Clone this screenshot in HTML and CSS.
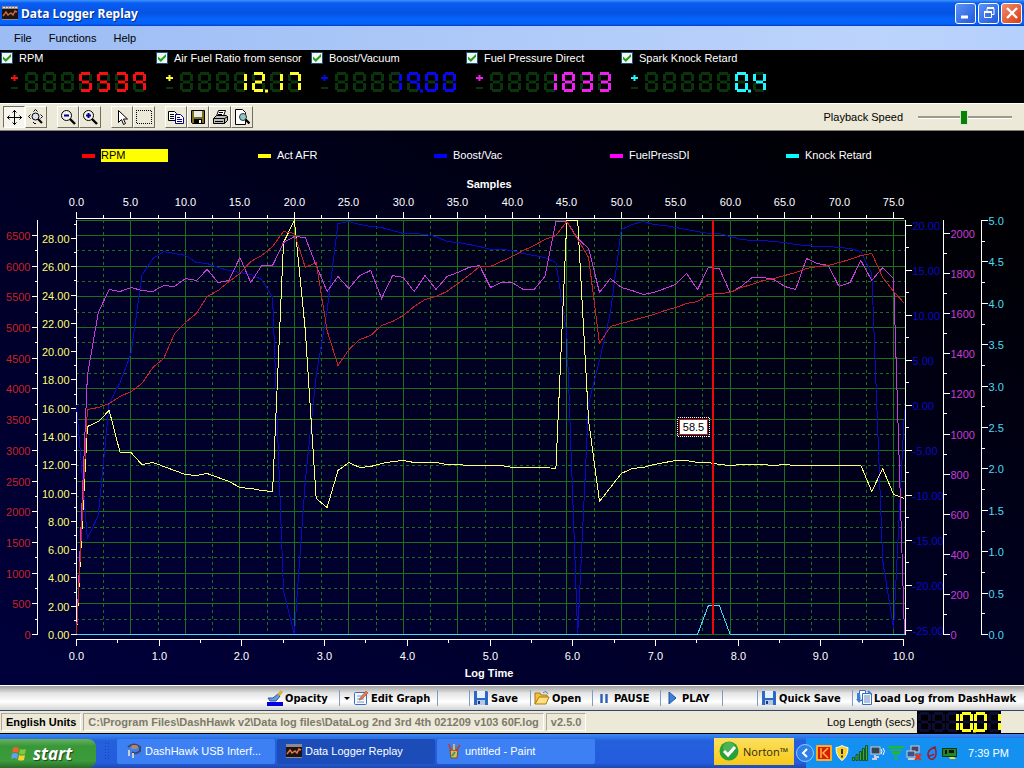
FILE: index.html
```
<!DOCTYPE html>
<html lang="en">
<head>
    <meta charset="UTF-8">
    <meta name="viewport" content="width=device-width, initial-scale=1.0">
    <title>Data Logger Replay</title>
    <link rel="stylesheet" href="styles.css">
</head>
<body>
    <header class="titlebar">
        <svg class="app-icon" width="16" height="14" viewBox="0 0 16 14"><rect width="16" height="14" fill="#8a8a90"/><rect y="3" width="16" height="10" fill="#1c1414"/><path d="M1 10l3-4 2 3 3-2 2 2 2-4 2 1" stroke="#c86838" stroke-width="1.500" fill="none"/><path d="M1 1.500h14" stroke="#ddd" stroke-dasharray="2 1"/></svg>
        <h1>Data Logger Replay</h1>
        <div class="window-buttons">
            <button class="win-btn" aria-label="Minimize"><svg width="18" height="18" viewBox="0 0 18 18"><path d="M4 13h7" stroke="#fff" stroke-width="3"/></svg></button>
            <button class="win-btn" aria-label="Restore"><svg width="18" height="18" viewBox="0 0 18 18" fill="none" stroke="#fff"><path d="M7 7V4.500h7v6h-2"/><path d="M7 4h7" stroke-width="2"/><path d="M4.500 7.500h7v6h-7z"/><path d="M4 8h8" stroke-width="2"/></svg></button>
            <button class="win-btn close" aria-label="Close"><svg width="18" height="18" viewBox="0 0 18 18"><path d="M4 4l10 10M14 4L4 14" stroke="#fff" stroke-width="2.400"/></svg></button>
        </div>
    </header>

    <nav class="menubar">
        <a href="#file">File</a>
        <a href="#functions">Functions</a>
        <a href="#help">Help</a>
    </nav>

    <section class="gauges" id="gauges"></section>

    <div class="toolbar">
        <div class="tool-group">
            <button class="tool pressed" aria-label="Pan"><svg width="16" height="16" viewBox="0 0 16 16" fill="none" stroke="#000"><path d="M8.500 1v15M1 8.500h15M6.500 3.500l2-2 2 2M6.500 13.500l2 2 2-2M3.500 6.500l-2 2 2 2M13.500 6.500l2 2-2 2"/></svg></button>
            <button class="tool" aria-label="Zoom pan"><svg width="16" height="16" viewBox="0 0 16 16" fill="none" stroke="#000"><circle cx="7.500" cy="7.500" r="3.500" fill="#dde"/><path d="M10 10l4 4" stroke-width="2"/><path d="M5.500 2.500l2-2 2 2M2.500 5.500l-2 2 2 2M12.500 5.500l2 2-2 2M5 13l2 2 1-1"/></svg></button>
        </div>
        <div class="tool-group">
            <button class="tool" aria-label="Zoom out"><svg width="16" height="16" viewBox="0 0 16 16" fill="none" stroke="#000"><circle cx="6.500" cy="6.500" r="5" fill="#f4f4f4"/><path d="M10 10l5 5" stroke-width="2.400"/><path d="M4 6.500h5" stroke="#000080" stroke-width="2"/></svg></button>
            <button class="tool" aria-label="Zoom in"><svg width="16" height="16" viewBox="0 0 16 16" fill="none" stroke="#000"><circle cx="6.500" cy="6.500" r="5" fill="#f4f4f4"/><path d="M10 10l5 5" stroke-width="2.400"/><path d="M4 6.500h5M6.500 4v5" stroke="#000080" stroke-width="2"/></svg></button>
        </div>
        <div class="tool-group">
            <button class="tool" aria-label="Select"><svg width="16" height="16" viewBox="0 0 16 16"><path d="M4.500 1.500v12l3-3 2 5 2-1-2-4.500h4z" fill="#fff" stroke="#000"/></svg></button>
            <button class="tool" aria-label="Select area"><svg width="16" height="16" viewBox="0 0 16 16"><rect x=".5" y="1.500" width="15" height="13" fill="none" stroke="#000" stroke-dasharray="1 1" stroke-dashoffset=".5" shape-rendering="crispEdges"/></svg></button>
        </div>
        <div class="tool-group">
            <button class="tool" aria-label="Copy"><svg width="16" height="16" viewBox="0 0 16 16" fill="#fff"><path d="M.5 2.500h6l2 2v7h-8z" stroke="#000"/><path d="M2 5.500h4M2 7.500h4M2 9.500h4" stroke="#000"/><path d="M7.500 5.500h5l3 3v6h-8z" stroke="#000080"/><path d="M9 8.500h3M9 10.500h5M9 12.500h5" stroke="#000080"/></svg></button>
            <button class="tool" aria-label="Save"><svg width="16" height="16" viewBox="0 0 16 16"><path d="M1.500 1.500h13v13h-12l-1-1z" fill="#777020" stroke="#000"/><rect x="4" y="2" width="8" height="6" fill="#e8e8e8"/><rect x="4" y="10" width="8" height="5"/><rect x="9" y="11" width="2" height="3" fill="#fff"/></svg></button>
            <button class="tool" aria-label="Print"><svg width="16" height="16" viewBox="0 0 16 16" stroke="#000"><path d="M4.500 7l2-5.500h7l-2 5.500" fill="#fff"/><path d="M7 3.500h4M6 5.500h4"/><path d="M1.500 9.500l3-3h10l1 1v4l-3 3h-11z" fill="#bbb"/><path d="M1.500 9.500h11v5M12.500 9.500l3-2M3 12.500h8" fill="none"/></svg></button>
            <button class="tool" aria-label="Print preview"><svg width="16" height="16" viewBox="0 0 16 16"><path d="M1.500.5h7l3 3v12h-10z" fill="#fff" stroke="#000"/><circle cx="9" cy="8" r="3.500" fill="#8cc8d0" stroke="#333"/><path d="M11.500 10.500l4 4" stroke="#000" stroke-width="2.400"/></svg></button>
        </div>
        <label class="speed-label" for="speed">Playback Speed</label>
        <input class="speed" id="speed" type="range" min="0" max="100" value="49">
    </div>

    <main class="chart">
        <ul class="legend">
            <li class="rpm"><span>RPM</span></li>
            <li class="afr"><span>Act AFR</span></li>
            <li class="boost"><span>Boost/Vac</span></li>
            <li class="fuel"><span>FuelPressDI</span></li>
            <li class="knock"><span>Knock Retard</span></li>
        </ul>
        <svg class="plot" id="plot" viewBox="0 170 1024 515"></svg>
    </main>

    <div class="actions">
        <button class="action no-line start-col"><svg width="16" height="16" viewBox="0 0 16 16"><path d="M1 8h5l5-4 2 2-4 5H3z" fill="#6c9ce0" stroke="#2850a0"/><path d="M10 4l4-4 2 2-3 4z" fill="#d8b040"/><rect y="12" width="16" height="4" fill="#0000e0"/></svg>Opacity</button>
        <button class="action"><svg width="8" height="16" viewBox="0 0 8 16"><path d="M1 7h6l-3 3z"/></svg><svg width="16" height="16" viewBox="0 0 16 16"><rect x="1.500" y="2.500" width="12" height="12" rx="1" fill="#f4f8ff" stroke="#3c6cc0"/><path d="M4 6h6M4 9h7M4 12h7" stroke="#6c9ce0"/><path d="M7 8l6-7 2 2-6 6-3 1z" fill="#e87848" stroke="#b04820" stroke-width=".6"/></svg>Edit Graph</button>
        <span class="blank"></span>
        <button class="action"><svg width="16" height="16" viewBox="0 0 16 16"><path d="M1 1h13l1 1v13H1z" fill="#2c68c8"/><rect x="4" y="1" width="8" height="7" fill="#e8f0ff"/><rect x="4" y="10" width="8" height="5" fill="#b8c8e0"/><rect x="5" y="11" width="2" height="3" fill="#1c3c80"/></svg>Save</button>
        <button class="action"><svg width="16" height="16" viewBox="0 0 16 16"><path d="M1 14V3h5l1 2h6v3" fill="#f0c040" stroke="#a87808"/><path d="M1 14l4-7h10l-3 7z" fill="#ffe080" stroke="#a87808"/><path d="M9 3q3-3 5 1" fill="none" stroke="#3c80c0"/></svg>Open</button>
        <button class="action wide"><svg width="10" height="16" viewBox="0 0 10 16"><path d="M2.500 4v9M7.500 4v9" stroke="#2c60b8" stroke-width="2.400"/></svg>PAUSE</button>
        <button class="action wide"><svg width="10" height="16" viewBox="0 0 10 16"><path d="M2 2l7 6-7 6z" fill="#3c80e0" stroke="#2050a0"/></svg>PLAY</button>
        <span class="blank"></span>
        <button class="action"><svg width="16" height="16" viewBox="0 0 16 16"><path d="M1 1h13l1 1v13H1z" fill="#2c68c8"/><rect x="4" y="1" width="8" height="7" fill="#e8f0ff"/><rect x="4" y="10" width="8" height="5" fill="#b8c8e0"/><rect x="5" y="11" width="2" height="3" fill="#1c3c80"/></svg>Quick Save</button>
        <button class="action"><svg width="16" height="16" viewBox="0 0 16 16"><path d="M3.500.5h6v10h-6z" fill="#fff" stroke="#3c6cc0"/><path d="M6.500 3.500h9v11h-9z" fill="#f4f8ff" stroke="#3c6cc0"/><path d="M8 6h6M8 8h6M8 10h6M8 12h6" stroke="#6c8cc0"/><path d="M4 3H1v6h2l2 3M0 9h6l-3 4z" fill="#3c80e0"/><path d="M12 1l3 3" stroke="#3c80e0" stroke-width="2"/></svg>Load Log from DashHawk</button>
    </div>

    <footer class="statusbar">
        <span class="panel units">English Units</span>
        <span class="panel muted">C:\Program Files\DashHawk v2\Data log files\DataLog 2nd 3rd 4th 021209 v103 60F.log</span>
        <span class="panel muted">v2.5.0</span>
        <span class="log-label">Log Length (secs)</span>
        <span class="log-display" id="log-length"></span>
    </footer>

    <div class="taskbar">
        <button class="start"><svg width="18" height="18" viewBox="0 0 18 18"><path d="M3 3q3-2 6 0l-1 5q-3-2-6 0z" fill="#f06030"/><path d="M10 4q3 1 6 0l-1 5q-3 1-6 0z" fill="#80c840"/><path d="M2 9q3-2 6 0l-1 5q-3-2-6 0z" fill="#60a0f8"/><path d="M9 10q3 1 6 0l-1 5q-3 1-6 0z" fill="#f8d030"/></svg>start</button>
        <span class="grip"></span>
        <button class="task"><svg width="16" height="16" viewBox="0 0 16 16"><path d="M2 4q6-5 12 0v4q-5 4-8 1" fill="none" stroke="#446" stroke-width="2"/><rect x="5" y="2" width="7" height="4" rx="2" fill="#b08868"/><path d="M3 7v6M7 10v5" stroke="#ccc" stroke-width="2"/></svg>DashHawk USB Interf...</button>
        <button class="task active"><svg width="16" height="14" viewBox="0 0 16 14"><rect width="16" height="14" fill="#8a8a90"/><rect y="3" width="16" height="10" fill="#1c1414"/><path d="M1 10l3-4 2 3 3-2 2 2 2-4 2 1" stroke="#e87840" stroke-width="1.500" fill="none"/></svg>Data Logger Replay</button>
        <button class="task"><svg width="16" height="16" viewBox="0 0 16 16"><path d="M4 7h8l-1 8H5z" fill="#d8b870" stroke="#705020"/><path d="M5 8L3 1M8 8V1M10 8l4-6" stroke="#c83820" stroke-width="1.500"/><path d="M8 7V1" stroke="#e8e040" stroke-width="1.500"/><path d="M6 13l3-4" stroke="#40a040" stroke-width="2"/></svg>untitled - Paint</button>
        <span class="norton"><svg width="20" height="20" viewBox="0 0 20 20"><circle cx="10" cy="10" r="9.500" fill="#28a038"/><circle cx="10" cy="7" r="6" fill="#70c870" opacity=".5"/><path d="M5 10l4 4 7-8" fill="none" stroke="#fff" stroke-width="3"/></svg>Norton™</span>
        <div class="tray">
            <button class="chevron" aria-label="Show hidden icons"><svg width="18" height="18" viewBox="0 0 18 18"><circle cx="9" cy="9" r="8.500" fill="#2c80e8" stroke="#90c8ff"/><path d="M11 5L7 9l4 4" fill="none" stroke="#fff" stroke-width="2"/></svg></button>
            <svg width="16" height="16" viewBox="0 0 16 16"><rect width="16" height="16" rx="1" fill="#f8b020"/><rect x="2" y="2" width="12" height="12" fill="#e01808"/><path d="M5 3v10M12 3L7 8l5 5" stroke="#f8c030" stroke-width="1.500" fill="none"/></svg>
            <svg width="16" height="16" viewBox="0 0 16 16"><path d="M8 .5q3 2 6 2 0 9-6 13-6-4-6-13 3 0 6-2z" fill="#f8d020" stroke="#fff"/><path d="M8 4v5M8 10.500v2" stroke="#333" stroke-width="2"/></svg>
            <svg width="16" height="16" viewBox="0 0 16 16" fill="#40a830" stroke="#104810" stroke-width=".8"><path d="M.5 12.500h2v3h-2zM4 9.500h2v6H4zM7.500 6.500h2v9h-2zM10.500 3.500h2v12h-2zM13.500.5h2v15h-2z"/></svg>
            <svg width="16" height="16" viewBox="0 0 16 16"><rect x="1" y="2" width="9" height="7" fill="#345" stroke="#ccd"/><path d="M5 10v2h4M2 14h5" stroke="#ccd" stroke-width="2" fill="none"/><path d="M11 4q2 2 0 5M13 3q3 3 0 7" fill="none" stroke="#fff"/></svg>
            <svg width="16" height="16" viewBox="0 0 16 16" stroke="#20b838" stroke-width="2"><path d="M0 2h16M2 5h12M4 8h8M6 11h4M7 14h2"/></svg>
            <svg width="16" height="16" viewBox="0 0 16 16"><rect x="5" y="1" width="8" height="6" fill="#446" stroke="#ccd"/><rect x="1" y="6" width="8" height="6" fill="#358" stroke="#ccd"/><path d="M2 14h7" stroke="#ccd" stroke-width="2"/><path d="M9 9l6 6M15 9l-6 6" stroke="#e83010" stroke-width="2"/></svg>
            <svg width="16" height="16" viewBox="0 0 16 16"><path d="M11 2Q3 5 4 10t5 4q5-3 2-12zM4 10q2 2 6-1" fill="none" stroke="#a01830" stroke-width="1.500"/></svg>
            <svg width="16" height="16" viewBox="0 0 16 16"><rect x=".5" y="3.500" width="14" height="8" fill="#208828" stroke="#083810"/><path d="M3 5h2v4H3zM7 5h5v3H7z" fill="#111"/><path d="M7 12h5l2 2H8z" fill="#f0e030"/></svg>
            <time class="clock">7:39 PM</time>
        </div>
    </div>

    <script src="script.js"></script>
</body>
</html>
```
FILE: styles.css
```
* {
    box-sizing: border-box;
}
body {
    margin: 0;
    min-height: 100vh;
    display: flex;
    flex-direction: column;
    font-family: "Liberation Sans", Arial, sans-serif;
    font-size: 11px;
    background: #000;
    overflow-x: hidden;
}
button {
    font: inherit;
    padding: 0;
    border: 0;
    background: none;
}
svg {
    flex: none;
}

/* title and menu */
.titlebar {
    height: 26px;
    display: flex;
    align-items: center;
    gap: 3px;
    padding: 0 2px;
    background: linear-gradient(#3c96ff, #0a5cf0 12%, #0454e4 50%, #0464fc 75%, #0460f8 92%, #0040c0);
}
.titlebar h1 {
    flex: 1;
    margin: 0;
    font: bold 12px "Noto Sans", sans-serif;
    color: #fff;
    text-shadow: 1px 1px #0a2a80;
}
.window-buttons {
    display: flex;
    gap: 2px;
}
.win-btn {
    width: 21px;
    height: 21px;
    display: grid;
    place-items: center;
    border: 1px solid #fff;
    border-radius: 3px;
    background: linear-gradient(135deg, #5c94f4, #2058dc);
}
.win-btn.close { background: linear-gradient(135deg, #f08c6c, #d83c14); }
.menubar {
    height: 24px;
    display: flex;
    align-items: center;
    gap: 17px;
    padding-left: 14px;
    background: linear-gradient(90deg, #9cbcf4, #bcd4fc 85%, #b4d0fc);
}
.menubar a {
    color: #000;
    text-decoration: none;
}

/* LED readouts */
.gauges {
    display: flex;
    height: 53px;
    background: #000;
    color: #fff;
}
.gauge {
    flex: 0 0 155px;
    padding: 2px 0 0 1px;
}
.gauge label {
    display: flex;
    align-items: center;
    gap: 6px;
    height: 12px;
    white-space: nowrap;
}
.gauge input {
    appearance: none;
    width: 12px;
    height: 12px;
    margin: 0;
    background: #f4f4f0;
    border: 1px solid #1c5180;
}
.gauge input:checked::before {
    content: "";
    display: block;
    width: 8px;
    height: 8px;
    margin: 1px;
    background: #21a121;
    clip-path: polygon(0 30%, 35% 62%, 100% 0, 100% 35%, 35% 100%, 0 65%);
}
.readout {
    display: flex;
    align-items: flex-start;
    gap: 5px;
    padding: 8px 0 0 9px;
}
.sign, .digit { display: block; }
.off { stroke: #0a340c; }
.on { stroke: currentColor; }
.digits {
    display: flex;
    gap: 5px;
}
.c-rpm { color: #f81010; }
.c-afr { color: #ffff30; }
.c-boost { color: #0808f0; }
.c-fuel { color: #f020f0; }
.c-knock { color: #20f8ff; }

/* toolbar */
.toolbar {
    height: 28px;
    display: flex;
    align-items: center;
    padding: 0 12px 0 3px;
    background: #ece9d8;
    border-top: 1px solid #fff;
    border-bottom: 1px solid #808078;
}
.tool-group {
    display: flex;
    margin-right: 10px;
}
.tool {
    width: 22px;
    height: 22px;
    display: grid;
    place-items: center;
    border: 1px solid;
    border-color: #fff #716f64 #716f64 #fff;
}
.tool.pressed {
    border-color: #716f64 #fff #fff #716f64;
    background: #f6f5ee;
}
.speed-label { margin-left: auto; }
.speed {
    appearance: none;
    width: 94px;
    height: 16px;
    margin: 0 0 0 15px;
    background: linear-gradient(#9c9a8c, #9c9a8c) 0 7px / 100% 2px no-repeat, linear-gradient(#fff, #fff) 0 9px / 100% 1px no-repeat;
}
.speed::-webkit-slider-thumb {
    appearance: none;
    width: 8px;
    height: 15px;
    background: #088008;
    border: 1px solid #d8e8d0;
}

/* chart */
.chart {
    flex: 1;
    background: linear-gradient(to top right, #00003c, #000020 55%, #000004 90%);
}
.legend {
    display: flex;
    align-items: center;
    height: 39px;
    margin: 0;
    padding: 10px 0 0 82px;
    list-style: none;
    color: #fff;
}
.legend li {
    flex: 0 0 176px;
    display: flex;
    align-items: center;
    gap: 6px;
}
.legend li::before {
    content: "";
    width: 13px;
    height: 4px;
    background: currentColor;
}
.legend .rpm { color: #f00; }
.legend .afr { color: #ff0; }
.legend .boost { color: #00f; }
.legend .fuel { color: #f0f; }
.legend .knock { color: #0ff; }
.legend span {
    color: #fff;
    line-height: 13px;
}
.legend .rpm span {
    width: 67px;
    color: #000;
    background: #ff0;
}
.plot {
    display: block;
    width: 100%;
    font-size: 11px;
}
.plot text { fill: currentColor; }
.plot .title { font-weight: bold; }
.plot .axis { stroke: #fff; }
.plot .grid { stroke: #1c701c; }
.plot .dashed { stroke-dasharray: 3 3; }
.plot .trace { fill: none; stroke: currentColor; }
.plot .white { color: #fff; }
.plot .rpm { color: #c42424; }
.plot .afr { color: #ffff70; }
.plot .boost { color: #0a0ac4; }
.plot .fuel { color: #c83cd8; }
.plot .knock { color: #48dcf0; }
.plot .cursor { stroke: #f00808; stroke-width: 2; }
.plot .tag { fill: #fff; stroke: #c01818; }
.plot .tag-dots { fill: none; stroke: #fff; stroke-dasharray: 1 1; }
.plot .tag-text { color: #000; }

/* action strip */
.actions {
    display: grid;
    grid-template-columns: 1fr 73px 98px 32px 61px 62px 68px 62px 35px 95px 172px;
    align-items: center;
    height: 26px;
    border-top: 1px solid #fff;
    border-bottom: 1px solid #304868;
    background: linear-gradient(#9c9c9c, #e4e4e4 30%, #fff 65%, #d4d4d4);
    font: bold 11px "DejaVu Sans Condensed", "DejaVu Sans", sans-serif;
}
.action {
    height: 16px;
    display: flex;
    align-items: center;
    gap: 2px;
    padding-left: 3px;
    border-left: 1px solid #7c9ccc;
    white-space: nowrap;
}
.action.start-col { grid-column: 2; }
.action.no-line {
    border-left: 0;
    padding-left: 1px;
}
.action.wide {
    gap: 5px;
    padding-left: 6px;
}
.blank {
    height: 16px;
    border-left: 1px solid #7c9ccc;
}

/* status bar */
.statusbar {
    height: 23px;
    display: flex;
    align-items: center;
    gap: 2px;
    padding: 0 23px 0 1px;
    background: #ece9d8;
    border-bottom: 1px solid #000;
}
.panel {
    height: 18px;
    padding: 0 4px;
    border: 1px solid;
    border-color: #aca899 #fff #fff #aca899;
    font-weight: bold;
    line-height: 16px;
    white-space: nowrap;
}
.muted { color: #7c7a6c; }
.log-label { margin-left: auto; }
.log-display {
    display: flex;
    gap: 1px;
    height: 22px;
    align-items: center;
    padding-left: 1px;
    background: #000;
    color: #ffff20;
}
.log-display .off { stroke: #0c0c34; }

/* taskbar */
.taskbar {
    height: 34px;
    display: flex;
    align-items: center;
    gap: 2px;
    color: #fff;
    background: linear-gradient(#3c8cf4, #2460dc 20%, #245cdc 85%, #1c48b0);
}
.start {
    width: 96px;
    height: 29px;
    align-self: flex-end;
    display: flex;
    align-items: center;
    gap: 5px;
    padding-left: 10px;
    border-radius: 0 8px 8px 0;
    background: linear-gradient(#68b060, #389838 25%, #3c9c3c 75%, #286c28);
    color: #fff;
    font: italic bold 17px "Open Sans", sans-serif;
    text-shadow: 1px 1px 1px #1c401c;
}
.grip {
    width: 6px;
    height: 18px;
    margin: 0 5px 0 6px;
    background: radial-gradient(circle, #1848a8 1px, transparent 1px) 0 0 / 3px 3px;
}
.task {
    flex: 0 1 158px;
    height: 25px;
    display: flex;
    align-items: center;
    gap: 3px;
    padding-left: 9px;
    border-radius: 2px;
    background: #3c80f4;
    color: #fff;
    white-space: nowrap;
}
.task.active { background: #1c4cb8; }
.norton {
    width: 80px;
    height: 27px;
    margin-left: auto;
    display: flex;
    align-items: center;
    gap: 4px;
    padding-left: 5px;
    background: linear-gradient(#fce060, #f8c818);
    color: #302808;
    font: 11px "Open Sans", sans-serif;
}
.tray {
    height: 30px;
    align-self: flex-end;
    display: flex;
    align-items: center;
    gap: 2px;
    padding-right: 15px;
    background: linear-gradient(90deg, transparent 10px, #1490f0 10px);
}
.chevron svg { display: block; }
.clock { margin-left: 8px; }
```
FILE: script.js
```
const NS = 'http://www.w3.org/2000/svg';

// lit segments for each digit, a-g clockwise from the top, g in the middle
const SEGMENTS = {
    a: 'M2 1.500H11', b: 'M11.500 2V9', c: 'M11.500 11V18', d: 'M2 18.500H11',
    e: 'M1.500 11V18', f: 'M1.500 2V9', g: 'M3 10H10'
};
const DIGITS = {
    '0': 'abcdef', '1': 'bc', '2': 'abged', '3': 'abgcd', '4': 'fgbc',
    '5': 'afgcd', '7': 'abc', '8': 'abcdefg', '9': 'abcfg', ' ': ''
};

function digitSvg(ch, dot) {
    let paths = '';
    ['off', 'on'].forEach(state => {
        for (const s in SEGMENTS) {
            if (DIGITS[ch].includes(s) === (state === 'on')) {
                paths += `<path class="${state}" d="${SEGMENTS[s]}"/>`;
            }
        }
    });
    if (dot) paths += '<path class="on" d="M13 19H16"/>';
    return `<svg class="digit" width="13" height="20" viewBox="0 0 13 20" overflow="visible" stroke-width="3" fill="none">${paths}</svg>`;
}

function digits(value, cells) {
    const count = value.replace('.', '').length;
    let html = digitSvg(' ').repeat(cells - count);
    for (let i = 0; i < value.length; i++) {
        if (value[i] !== '.') html += digitSvg(value[i], value[i + 1] === '.');
    }
    return html;
}

const gauges = [
    ['rpm', 'RPM', '5539'],
    ['afr', 'Air Fuel Ratio from sensor', '12.17'],
    ['boost', 'Boost/Vacuum', '19.00'],
    ['fuel', 'Fuel Pressure Direct', '1833'],
    ['knock', 'Spark Knock Retard', '0.4']
];
document.getElementById('gauges').innerHTML = gauges.map(([key, name, value]) => `
    <div class="gauge">
        <label><input type="checkbox" checked>${name}</label>
        <div class="readout c-${key}">
            <svg class="sign" width="10" height="20" viewBox="0 0 10 20" stroke-width="2"><path class="on" d="M1 6H8M4.500 3V9"/><path class="off" d="M1 16H8"/></svg>
            <div class="digits" role="img" aria-label="${value}">${digits(value, 7)}</div>
        </div>
    </div>`).join('');

const logLength = document.getElementById('log-length');
logLength.setAttribute('role', 'img');
logLength.setAttribute('aria-label', '10.01');
logLength.innerHTML = digits('10.01', 6);

// chart
const LEFT = 76, RIGHT = 905, TOP = 220, BOTTOM = 634;
const plot = document.getElementById('plot');

function add(tag, cls, attrs, text) {
    const el = document.createElementNS(NS, tag);
    el.setAttribute('class', cls);
    for (const k in attrs) el.setAttribute(k, attrs[k]);
    if (text !== undefined) el.textContent = text;
    plot.appendChild(el);
}

function line(cls, x1, y1, x2, y2) {
    add('line', cls, { x1, y1, x2, y2, 'shape-rendering': 'crispEdges' });
}

const px = v => Math.floor(v) + 0.5;
const sampleX = s => LEFT + 0.5 + s * 10.895;
const timeX = t => LEFT + 0.5 + t * 82.7;

// grid follows the rpm and sample axes
for (let i = 0; i <= 26; i++) {
    const y = px(BOTTOM + 0.5 - i * 250 * 0.0614);
    line(i % 2 ? 'grid dashed' : 'grid', LEFT, y, RIGHT, y);
}
for (let i = 0; i <= 30; i++) {
    const x = px(sampleX(i * 2.5));
    line(i % 2 ? 'grid dashed' : 'grid', x, TOP, x, BOTTOM);
}
line('grid', LEFT, TOP + 0.5, RIGHT, TOP + 0.5);

// horizontal axes
line('axis', LEFT, 218.5, RIGHT - 1, 218.5);
for (let i = 0; i <= 30; i++) {
    const x = px(sampleX(i * 2.5));
    line('axis', x, i % 2 ? 215 : 212, x, 218);
    if (i % 2 === 0) add('text', 'white', { x: x, y: 206, 'text-anchor': 'middle' }, (i * 2.5).toFixed(1));
}
line('axis', LEFT, 639.5, RIGHT - 1, 639.5);
for (let i = 0; i <= 20; i++) {
    const x = px(timeX(i / 2));
    line('axis', x, 640, x, i % 2 ? 643 : 646);
    if (i % 2 === 0) add('text', 'white', { x: x, y: 660, 'text-anchor': 'middle' }, (i / 2).toFixed(1));
}
add('text', 'white title', { x: 489, y: 188, 'text-anchor': 'middle' }, 'Samples');
add('text', 'white title', { x: 489, y: 677, 'text-anchor': 'middle' }, 'Log Time');

// vertical axes: step is the distance between labels, a short tick sits halfway
function axis(cls, x, side, from, to, step, decimals, zero, scale) {
    line('axis', x, TOP, x, BOTTOM + 1);
    for (let v = from; v <= to + 0.001; v += step / 2) {
        const y = px(zero - v * scale);
        if (y < TOP) continue;
        const major = Math.abs(v / step - Math.round(v / step)) < 0.01;
        line('axis', x, y, x + side * (major ? 6 : 3), y);
        if (major) {
            add('text', cls, { x: x + side * 7, y: y + 4, 'text-anchor': side < 0 ? 'end' : 'start' }, v.toFixed(decimals));
        }
    }
}
axis('rpm', 37.5, -1, 0, 6740, 500, 0, 634.5, 0.0614);
axis('afr', 76.5, -1, 0, 29, 2, 2, 634.5, 14.143);
axis('boost', 905.5, 1, -25, 20, 5, 2, 405.3, 9.01);
axis('fuel', 943.5, 1, 0, 2060, 200, 0, 634.5, 0.2005);
axis('knock', 981.5, 1, 0, 5, 0.5, 1, 634.5, 82.8);

// plotted height of every sample
const traces = {
    boost: [405, 538, 515, 403, 382, 353, 275, 258, 251, 253, 255, 262, 263, 267, 270, 272, 274, 279, 297, 590,
        634, 480, 375, 310, 223, 221, 224, 226, 227, 230, 233, 233, 234, 236, 241, 242, 244, 246, 249, 249,
        250, 253, 255, 257, 262, 333, 634, 403, 360, 312, 229, 224, 221, 224, 225, 227, 229, 231, 233, 233,
        236, 239, 240, 240, 241, 242, 244, 245, 246, 246, 247, 248, 251, 273, 560, 628, 410],
    afr: [634, 426, 421, 410, 452, 452, 464, 462, 466, 470, 474, 475, 473, 477, 481, 487, 488, 490, 491, 242,
        220, 330, 498, 507, 470, 462, 467, 466, 463, 461, 460, 462, 462, 462, 464, 464, 465, 465, 465, 465,
        467, 467, 467, 467, 468, 220, 220, 420, 501, 487, 473, 468, 467, 464, 462, 460, 460, 462, 462, 464,
        465, 464, 464, 464, 465, 464, 465, 465, 465, 465, 465, 465, 465, 491, 468, 494, 498],
    fuel: [634, 375, 312, 289, 291, 287, 290, 291, 285, 286, 278, 280, 269, 282, 280, 257, 282, 265, 265, 242,
        236, 237, 265, 291, 276, 288, 275, 270, 298, 275, 277, 291, 275, 289, 276, 272, 267, 265, 287, 282,
        282, 289, 289, 276, 221, 221, 238, 248, 292, 278, 287, 290, 294, 292, 288, 284, 273, 289, 267, 268,
        292, 286, 277, 277, 279, 286, 289, 258, 263, 265, 286, 282, 260, 280, 267, 278, 634],
    rpm: [634, 409, 407, 403, 396, 391, 383, 367, 358, 333, 322, 313, 296, 290, 281, 273, 261, 255, 246, 231,
        233, 267, 262, 330, 365, 349, 339, 335, 325, 321, 315, 306, 299, 296, 291, 283, 275, 266, 266, 261,
        256, 250, 245, 239, 235, 221, 239, 257, 343, 326, 323, 320, 317, 314, 310, 307, 303, 301, 294, 293,
        292, 287, 284, 280, 278, 275, 272, 268, 266, 265, 262, 259, 255, 253, 277, 291, 303],
    knock: Array.from({ length: 77 }, (_, i) => (i === 58 || i === 59 ? 605 : 634))
};
for (const name in traces) {
    const points = traces[name].map((y, i) => `${sampleX(i).toFixed(1)},${y + 0.5}`).join(' ');
    add('polyline', 'trace ' + name, { points, 'shape-rendering': 'crispEdges' });
}

// playback cursor
line('cursor', 713, TOP, 713, BOTTOM);
add('rect', 'tag-dots', { x: 677.5, y: 417.5, width: 32, height: 19, 'shape-rendering': 'crispEdges' });
add('rect', 'tag', { x: 679.5, y: 419.5, width: 28, height: 15, 'shape-rendering': 'crispEdges' });
add('text', 'tag-text', { x: 693.5, y: 431, 'text-anchor': 'middle' }, '58.5');
```
